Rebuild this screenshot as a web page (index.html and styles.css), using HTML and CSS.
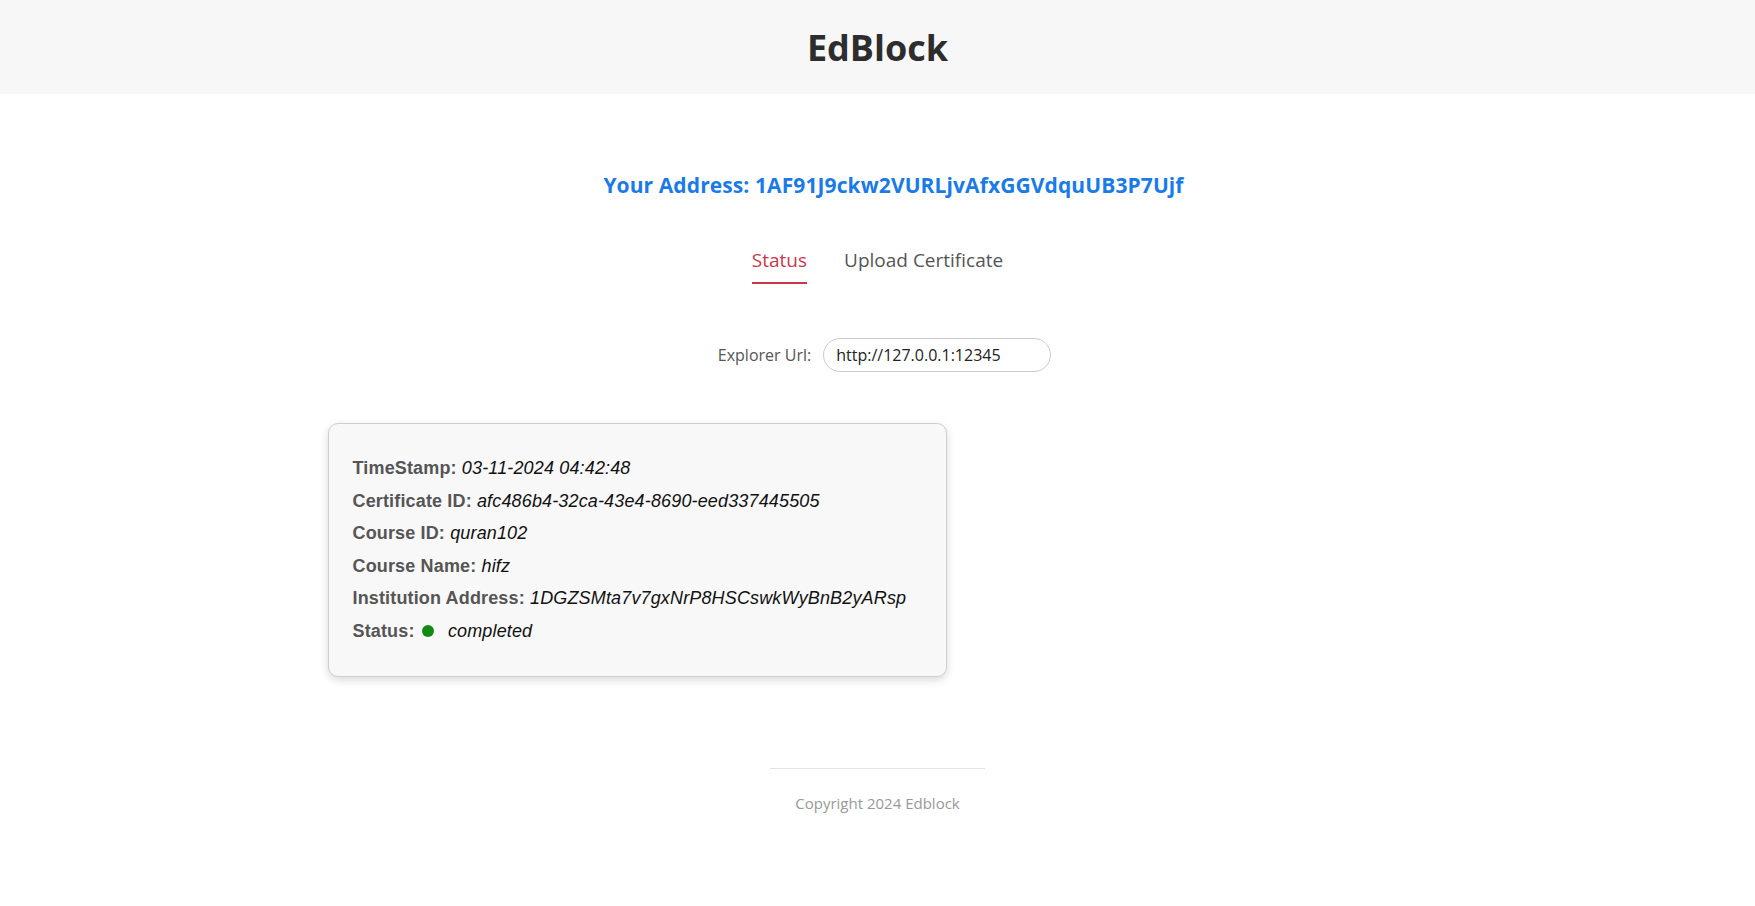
FILE: index.html
```html
<!DOCTYPE html>
<html>
<head>
<meta charset="utf-8">
<link rel="stylesheet" href="styles.css">
</head>
<body>
<header class="topbar"><h1 class="brand">EdBlock</h1></header>
<main class="main">
  <h2 class="address">Your Address: 1AF91J9ckw2VURLjvAfxGGVdquUB3P7Ujf</h2>
  <nav class="tabs">
    <span class="tab active">Status</span>
    <span class="tab">Upload Certificate</span>
  </nav>
  <div class="explorer">
    <label class="explorer-label">Explorer Url:</label>
    <input class="explorer-input" type="text" value="http://127.0.0.1:12345">
  </div>
  <section class="cards">
    <div class="card">
      <p class="row"><b>TimeStamp:</b> <i>03-11-2024 04:42:48</i></p>
      <p class="row"><b>Certificate ID:</b> <i>afc486b4-32ca-43e4-8690-eed337445505</i></p>
      <p class="row"><b>Course ID:</b> <i>quran102</i></p>
      <p class="row"><b>Course Name:</b> <i>hifz</i></p>
      <p class="row"><b>Institution Address:</b> <i>1DGZSMta7v7gxNrP8HSCswkWyBnB2yARsp</i></p>
      <p class="row"><b>Status:</b> <span class="dot"></span> <i class="status-val">completed</i></p>
    </div>
  </section>
</main>
<footer class="footer">
  <div class="footer-line"></div>
  <p class="copy">Copyright 2024 Edblock</p>
</footer>
</body>
</html>
```
FILE: styles.css
```css
html, body { margin: 0; padding: 0; background: #fff; }
body { font-family: "Open Sans", "Noto Sans", sans-serif; color: #333; }
.topbar { background: #f7f7f7; height: 94px; display: flex; align-items: center; justify-content: center; }
.brand { margin: 0; font-size: 36px; font-weight: 700; color: #2d2d2d; letter-spacing: 0; }
.main { display: flex; flex-direction: column; align-items: center; }
.address { margin: 76px 0 0 32px; font-size: 21px; font-weight: 700; color: #1a7ae6; line-height: 30px; letter-spacing: 0.1px; }
.tabs { margin-top: 47px; display: flex; gap: 37px; }
.tab { font-size: 19px; color: #555; padding-bottom: 9px; line-height: 26px; border-bottom: 2px solid transparent; }
.tab.active { color: #c8374c; border-bottom-color: #c8374c; }
.explorer { margin-top: 54px; display: flex; align-items: center; gap: 12px; margin-left: 14px; }
.explorer-label { font-size: 16px; color: #555; }
.explorer-input { width: 228px; height: 34px; box-sizing: border-box; border: 1px solid #ccc; border-radius: 17px; padding: 0 12px; font-family: "Open Sans", sans-serif; font-size: 16px; color: #222; background: #fff; outline: none; }
.cards { width: 1100px; margin-top: 51px; display: flex; }
.card { width: 619px; box-sizing: border-box; background: #f8f8f8; border: 1px solid #cfcfcf; border-radius: 10px; box-shadow: 0 3px 8px rgba(0,0,0,0.15); padding: 28px 24px 29px; font-family: "Liberation Sans", Arial, sans-serif; font-size: 18px; }
.row { margin: 0; line-height: 32.5px; color: #111; letter-spacing: 0.15px; }
.row b { color: #555; font-weight: 700; }
.dot { display: inline-block; width: 12px; height: 12px; border-radius: 50%; background: #128a12; margin: 0 9px 0 2px; }
.footer { display: flex; flex-direction: column; align-items: center; margin-top: 91px; }
.footer-line { width: 215px; height: 1px; background: #e4e4e4; }
.copy { margin: 24px 0 0; font-size: 15px; color: #999; }
```
